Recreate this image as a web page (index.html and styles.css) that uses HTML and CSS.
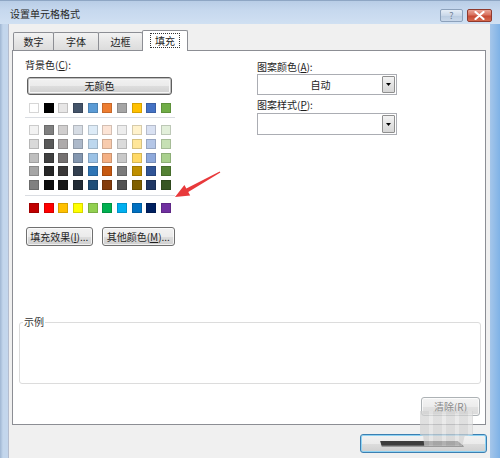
FILE: index.html
```html
<!DOCTYPE html>
<html>
<head>
<meta charset="utf-8">
<link rel="stylesheet" href="styles.css">
</head>
<body>
<div class="window">
  <div class="titlebar">
    <span class="title">设置单元格格式</span>
    <div class="caption-btns">
      <div class="cap help">?</div>
      <div class="cap close">
        <svg width="11" height="9" viewBox="0 0 11 9"><path d="M1.5 1 L9.5 8 M9.5 1 L1.5 8" stroke="#fff" stroke-width="2.2" stroke-linecap="round"/></svg>
      </div>
    </div>
  </div>
  <div class="frame">
    <div class="client">
      <div class="tabs">
        <div class="tab t1">数字</div>
        <div class="tab t2">字体</div>
        <div class="tab t3">边框</div>
        <div class="tab active"><span class="focus">填充</span></div>
      </div>
      <div class="panel">
        <div class="cols">
          <div class="left">
            <div class="label">背景色(<u>C</u>):</div>
            <div class="btn nocolor">无颜色</div>
            <div class="swatches theme">
              <i style="background:#FFFFFF"></i><i style="background:#000000"></i><i style="background:#E7E6E6"></i><i style="background:#44546A"></i><i style="background:#5B9BD5"></i><i style="background:#ED7D31"></i><i style="background:#A5A5A5"></i><i style="background:#FFC000"></i><i style="background:#4472C4"></i><i style="background:#70AD47"></i>
            </div>
            <div class="sep sep1"></div>
            <div class="swatches shades">
              <i style="background:#F2F2F2"></i><i style="background:#808080"></i><i style="background:#D0CECE"></i><i style="background:#D6DCE4"></i><i style="background:#DDEBF7"></i><i style="background:#FCE4D6"></i><i style="background:#EDEDED"></i><i style="background:#FFF2CC"></i><i style="background:#D9E1F2"></i><i style="background:#E2EFDA"></i>
              <i style="background:#D9D9D9"></i><i style="background:#595959"></i><i style="background:#AEAAAA"></i><i style="background:#ADB9CA"></i><i style="background:#BDD7EE"></i><i style="background:#F8CBAD"></i><i style="background:#DBDBDB"></i><i style="background:#FFE699"></i><i style="background:#B4C6E7"></i><i style="background:#C6E0B4"></i>
              <i style="background:#BFBFBF"></i><i style="background:#404040"></i><i style="background:#757171"></i><i style="background:#8497B0"></i><i style="background:#9BC2E6"></i><i style="background:#F4B084"></i><i style="background:#C9C9C9"></i><i style="background:#FFD966"></i><i style="background:#8EA9DB"></i><i style="background:#A9D08E"></i>
              <i style="background:#A6A6A6"></i><i style="background:#262626"></i><i style="background:#3A3838"></i><i style="background:#333F4F"></i><i style="background:#2F75B5"></i><i style="background:#C65911"></i><i style="background:#7B7B7B"></i><i style="background:#BF8F00"></i><i style="background:#305496"></i><i style="background:#548235"></i>
              <i style="background:#808080"></i><i style="background:#0D0D0D"></i><i style="background:#161616"></i><i style="background:#222B35"></i><i style="background:#1F4E78"></i><i style="background:#833C0C"></i><i style="background:#525252"></i><i style="background:#806000"></i><i style="background:#203764"></i><i style="background:#375623"></i>
            </div>
            <div class="sep sep2"></div>
            <div class="swatches standard">
              <i style="background:#C00000"></i><i style="background:#FF0000"></i><i style="background:#FFC000"></i><i style="background:#FFFF00"></i><i style="background:#92D050"></i><i style="background:#00B050"></i><i style="background:#00B0F0"></i><i style="background:#0070C0"></i><i style="background:#002060"></i><i style="background:#7030A0"></i>
            </div>
            <div class="btnrow">
              <div class="btn effects">填充效果(<u>I</u>)...</div>
              <div class="btn more">其他颜色(<u>M</u>)...</div>
            </div>
          </div>
          <div class="right">
            <div class="label l1">图案颜色(<u>A</u>):</div>
            <div class="combo c1"><span class="val">自动</span><span class="drop"><svg width="5" height="3" viewBox="0 0 5 3"><path d="M0 0 H5 L2.5 3 Z" fill="#000"/></svg></span></div>
            <div class="label l2">图案样式(<u>P</u>):</div>
            <div class="combo c2"><span class="val"></span><span class="drop"><svg width="5" height="3" viewBox="0 0 5 3"><path d="M0 0 H5 L2.5 3 Z" fill="#000"/></svg></span></div>
          </div>
        </div>
        <fieldset class="sample"><legend>示例</legend></fieldset>
        <div class="btn clear">清除(R)</div>
      </div>
      <div class="footer">
        <div class="btn ok"><span class="redact"></span></div>
      </div>
    </div>
  </div>
  <svg class="arrow" width="55" height="35" viewBox="0 0 55 35">
    <polygon points="49.67,3.38 16.34,20.54 14.4,17 5,29 20.2,27.6 18.26,24.06 50.33,4.62" fill="#e8393b"/>
  </svg>
  <div class="ghost"></div>
</div>
</body>
</html>
```

FILE: styles.css
```css
* { box-sizing: border-box; }
html, body { margin: 0; padding: 0; }
body {
  font-family: "Noto Sans CJK SC", "Liberation Sans", sans-serif;
  font-size: 10px;
  color: #1e1e1e;
}
u { text-decoration: underline; text-underline-offset: 1px; }

.window {
  position: relative;
  width: 500px;
  height: 458px;
  overflow: hidden;
  background: linear-gradient(90deg, #9fb6d2 0px, #c3d6ec 3px, #c9daef 80%, #b8d0ec 97%, #7fb2e6 100%);
}
.titlebar {
  height: 24px;
  display: flex;
  justify-content: space-between;
  align-items: flex-start;
  padding-left: 10px;
  background: linear-gradient(#b8cde6, #c6d8ee 40%, #d0e0f2);
  border-top: 1px solid #8ea6c4;
}
.title {
  margin-top: 7px;
  line-height: 12px;
  font-size: 10px;
  color: #2a2a2a;
}
.caption-btns {
  display: flex;
  gap: 4px;
  margin-top: 8px;
  margin-right: 8px;
}
.cap {
  height: 13px;
  border-radius: 2px;
  display: flex;
  align-items: center;
  justify-content: center;
}
.help {
  width: 23px;
  border: 1px solid #8ca1bb;
  background: linear-gradient(#e6eef7, #cad8e9 50%, #b9cbe0 51%, #c9d8ea);
  color: #6f7f93;
  font-size: 9px;
  line-height: 11px;
}
.close {
  width: 25px;
  border: 1px solid #8f3a2e;
  background: linear-gradient(#eaa597, #d9725f 45%, #c64a34 55%, #d66a4e);
}

.frame {
  display: flex;
  height: 434px;
  padding: 0 10px 0 8px;
}
.client {
  flex: 1;
  background: #f0f0f0;
  padding: 6px 4px 0 3px;
  border-left: 1px solid #b4bccd;
}

.tabs {
  display: flex;
  align-items: flex-end;
  height: 20px;
  padding-left: 1px;
}
.tab {
  height: 18px;
  border: 1px solid #8c8e94;
  border-bottom: none;
  border-radius: 2px 2px 0 0;
  background: linear-gradient(#f3f3f3, #e6e6e6 50%, #dcdcdc);
  text-align: center;
  line-height: 17px;
  font-size: 10px;
  margin-right: -1px;
}
.t1 { width: 41px; }
.t2 { width: 46px; }
.t3 { width: 45px; }
.tab.active {
  width: 46px;
  height: 21px;
  margin-bottom: -1px;
  background: #fff;
  position: relative;
  z-index: 1;
  padding-top: 2px;
  line-height: 14px;
}
.focus {
  display: inline-block;
  border: 1px dotted #333;
  padding: 0 4px;
  line-height: 13px;
}

.panel {
  height: 375px;
  border: 1px solid #8c8e94;
  background: #fff;
  display: flex;
  flex-direction: column;
}
.cols {
  display: grid;
  grid-template-columns: 150px 140px;
  column-gap: 82px;
  margin-left: 12px;
  padding-top: 8px;
}
.label { line-height: 12px; height: 12px; white-space: nowrap; }

.btn {
  border: 1px solid #707070;
  border-radius: 3px;
  background: linear-gradient(#f2f2f2 0%, #ebebeb 50%, #dddddd 51%, #cfcfcf 100%);
  box-shadow: inset 0 0 0 1px rgba(255,255,255,0.7);
  text-align: center;
  white-space: nowrap;
}
.nocolor {
  width: 145px;
  height: 18px;
  margin: 6px 0 0 2px;
  line-height: 16px;
  border-color: #5e5e5e;
  box-shadow: inset 0 0 0 1px #bdbdbd, inset 0 0 0 2px #f6f6f6;
}

.swatches {
  display: grid;
  grid-template-columns: repeat(10, 10px);
  column-gap: 4.67px;
  row-gap: 3.75px;
  margin-left: 4px;
}
.swatches i {
  display: block;
  width: 10px;
  height: 10px;
  box-shadow: inset 0 0 0 1px rgba(0,0,0,0.16);
}
.theme { margin-top: 8px; }
.sep { height: 1px; background: #dadde2; width: 150px; }
.sep1 { margin-top: 4px; }
.shades { margin-top: 7px; }
.sep2 { margin-top: 5px; }
.standard { margin-top: 7px; }

.btnrow {
  display: flex;
  gap: 9px;
  margin: 14px 0 0 1px;
}
.btnrow .btn { height: 19px; line-height: 17px; }
.effects { width: 68px; }
.more { width: 75px; }

.l1 { margin-top: 2px; }
.combo {
  width: 140px;
  height: 21px;
  margin-top: 1px;
  border: 1px solid #abadb3;
  background: #fff;
  display: flex;
  padding: 1px;
}
.combo .val {
  flex: 1;
  text-align: center;
  line-height: 17px;
}
.combo .drop {
  width: 13px;
  border: 1px solid #8f8f8f;
  border-radius: 1px;
  background: linear-gradient(#f3f3f3, #e4e4e4 50%, #d6d6d6);
  display: flex;
  align-items: center;
  justify-content: center;
}
.l2 { margin-top: 4px; }
.c2 { margin-top: 2px; height: 22px; }

.sample {
  margin: 70px 0 0 6px;
  width: 462px;
  height: 68px;
  padding: 0;
  border: 1px solid #dcdcdc;
  border-radius: 3px;
}
.sample legend {
  margin-left: 3px;
  padding: 0 1px;
  line-height: 12px;
  font-size: 10px;
  color: #333;
}

.clear {
  align-self: flex-end;
  margin: 13px 5px 0 0;
  width: 59px;
  height: 19px;
  line-height: 17px;
  color: #8a8a8a;
  border-color: #adb2b5;
  background: linear-gradient(#f4f4f4, #ececec 50%, #e2e2e2 51%, #dadada);
}

.footer {
  display: flex;
  justify-content: flex-end;
  margin-top: 9px;
  margin-right: -1px;
}
.ok {
  width: 127px;
  height: 19px;
  border-color: #3c7fb1;
  box-shadow: inset 0 0 0 1px #8fd3f3;
  display: flex;
  align-items: center;
  padding-left: 19px;
}
.redact {
  display: block;
  width: 84px;
  height: 6px;
  background: linear-gradient(#3d3d3d 0, #3d3d3d 60%, #6a6a6a 60%, #5a5a5a 100%);
  clip-path: polygon(0 0, 92% 0, 100% 100%, 2% 100%);
}

.arrow {
  position: absolute;
  left: 170px;
  top: 168px;
}
.ghost {
  position: absolute;
  left: 420px;
  top: 411px;
  width: 53px;
  height: 35px;
  background: repeating-linear-gradient(90deg, rgba(210,210,210,0.7) 0 9px, rgba(226,226,226,0.7) 9px 13px);
  clip-path: polygon(0 0, 100% 0, 100% 68%, 84% 72%, 80% 100%, 8% 100%, 6% 72%, 0 68%);
}
```
